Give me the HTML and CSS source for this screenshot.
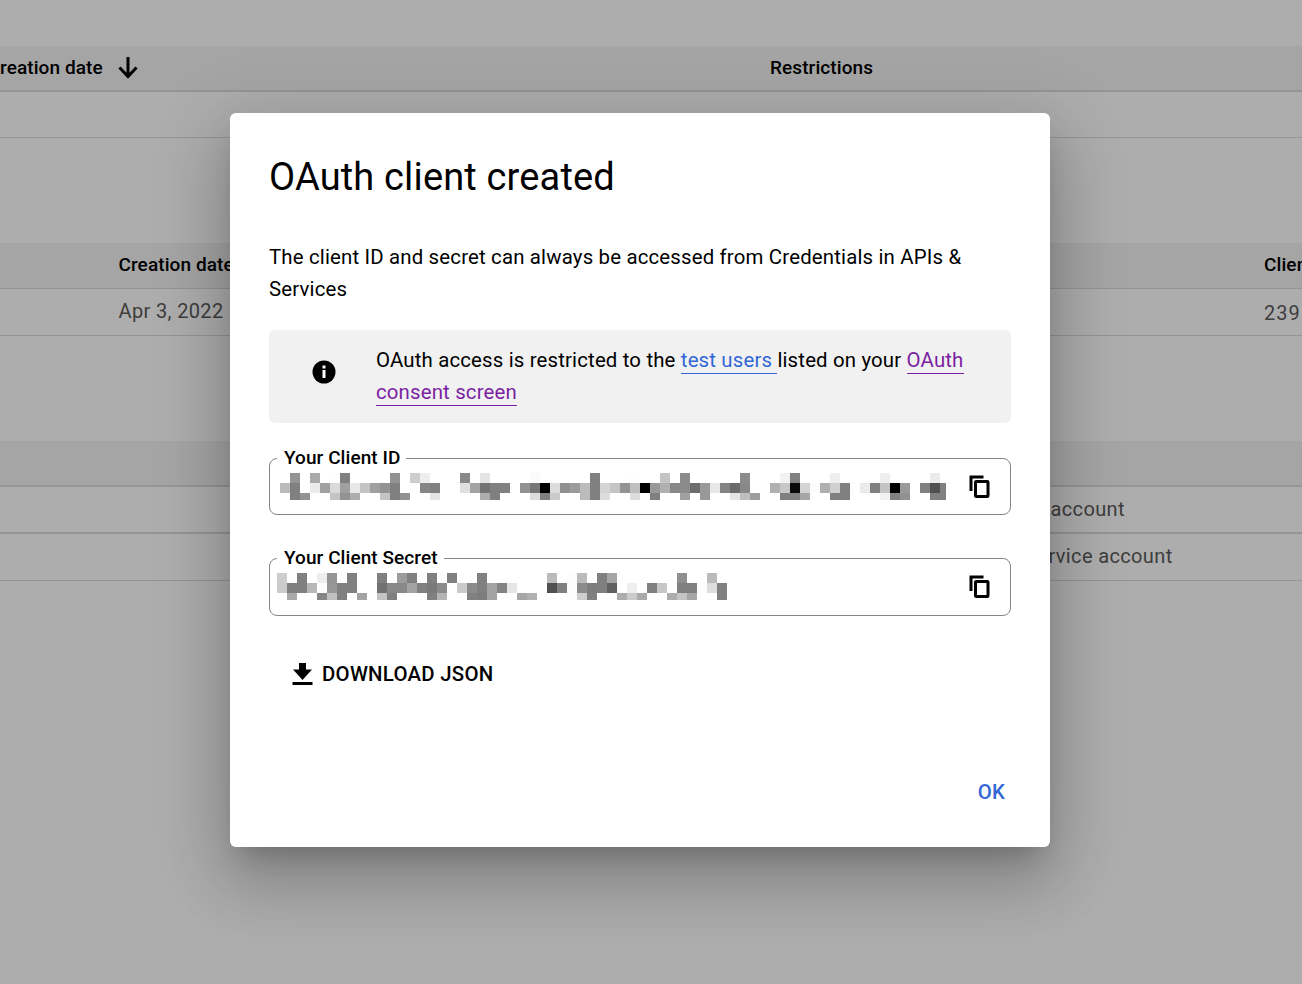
FILE: index.html
```html
<!DOCTYPE html>
<html lang="en">
<head>
<meta charset="utf-8">
<title>OAuth client created</title>
<link rel="stylesheet" href="styles.css">
</head>
<body>
<main class="page">
  <section class="table table-keys">
    <div class="thead thick"><span class="col-date"><span class="th th-date">reation date</span>
      <svg class="sort" width="20" height="22" viewBox="0 0 20 22"><path d="M10 0V19M1.500 10.500L10 19.500L18.500 10.500" fill="none" stroke="#000" stroke-width="3"/></svg></span>
      <span class="th th-restrict">Restrictions</span></div>
    <div class="row"></div>
  </section>
  <section class="table table-clients">
    <div class="thead"><span class="th th-created">Creation date</span><span class="th th-client">Client ID</span></div>
    <div class="row"><span class="td td-created">Apr 3, 2022</span><span class="td td-client">239</span></div>
  </section>
  <section class="table table-accounts">
    <div class="thead thick"></div>
    <div class="row thick"><span class="td td-account">account</span></div>
    <div class="row"><span class="td td-service">rvice account</span></div>
  </section>
</main>
<div class="overlay">
  <div class="dialog" role="dialog" aria-labelledby="title">
    <h1 class="title" id="title"><span class="title-text">OAuth client created</span></h1>
    <p class="intro">The client ID and secret can always be accessed from Credentials in APIs &amp; Services</p>
    <div class="notice">
      <svg class="info" width="24" height="24" viewBox="0 0 24 24"><circle cx="12" cy="12" r="11.500"/><path d="M10.500 5.500h3v3h-3zM10.500 10h3v8h-3z" fill="#fff"/></svg>
      <p class="notice-text">OAuth access is restricted to the <a class="link">test users </a>listed on your <a class="link visited">OAuth</a><br><a class="link visited">consent screen</a></p>
    </div>
    <fieldset class="field field-id">
      <legend class="legend"><span class="label-id">Your Client ID</span></legend>
      <div class="value">
        <svg class="mosaic" id="client-id" width="666" height="27" shape-rendering="crispEdges"></svg>
        <svg class="copy" width="22" height="24" viewBox="0 0 22 24"><path d="M2 16V2H14.500" fill="none" stroke="#000" stroke-width="3"/><rect x="6.500" y="6.500" width="12.500" height="15" rx=".7" fill="none" stroke="#000" stroke-width="3"/></svg>
      </div>
    </fieldset>
    <fieldset class="field field-secret">
      <legend class="legend"><span class="label-secret">Your Client Secret</span></legend>
      <div class="value">
        <svg class="mosaic" id="client-secret" width="450" height="27" shape-rendering="crispEdges"></svg>
        <svg class="copy" width="22" height="24" viewBox="0 0 22 24"><path d="M2 16V2H14.500" fill="none" stroke="#000" stroke-width="3"/><rect x="6.500" y="6.500" width="12.500" height="15" rx=".7" fill="none" stroke="#000" stroke-width="3"/></svg>
      </div>
    </fieldset>
    <div class="download">
      <svg width="21" height="22" viewBox="0 0 21 22"><path d="M7 0h7v6.500h6L10.500 17L1 6.500h6zM.5 19h20v3H.5z"/></svg>
      <span class="download-text">DOWNLOAD JSON</span>
    </div>
    <div class="actions"><span class="ok">OK</span></div>
  </div>
</div>
<script src="mosaic.js"></script>
</body>
</html>
```
FILE: styles.css
```css
* { box-sizing: border-box; }
body { margin: 0; background: #adadad; font-family: Roboto, "Liberation Sans", sans-serif; color: #000; overflow: hidden; }
.page { height: 984px; width: 1302px; padding-top: 46px; overflow: hidden; }
.thead { height: 46px; background: #a5a5a5; border-bottom: 1px solid #959595; display: flex; align-items: center; }
.row { height: 47px; border-bottom: 1px solid #959595; display: flex; align-items: center; }
.thick { border-bottom-width: 2px; }
.table-keys .row { height: 46px; }
.table-clients { margin-top: 105px; }
.table-accounts { margin-top: 105px; }
.th { font-size: 19px; font-weight: 500; line-height: 24px; white-space: nowrap; letter-spacing: .09px; }
.td { font-size: 20px; line-height: 24px; color: #3d3d3d; white-space: nowrap; letter-spacing: .36px; padding-bottom: 2px; }
.col-date { width: 770px; display: flex; align-items: center; gap: 15px; }
.table-clients .thead, .table-clients .row { padding-left: 118.5px; }
.th-created, .td-created { width: 1145.5px; flex: none; }
.table-clients .thead { padding-bottom: 2px; }
.td-client { padding-top: 4px; letter-spacing: 1px; }
.table-accounts .row { padding-left: 1050.5px; }
.table-accounts .td-service { margin-left: -2px; }
.overlay { position: absolute; inset: 0; padding: 113px 0 0 230px; }
.dialog { width: 820px; height: 734px; padding: 39px; border-radius: 6px; background: #fff; display: flex; flex-direction: column;
  box-shadow: 0 17px 24px -11px rgba(0,0,0,.2), 0 38px 60px 5px rgba(0,0,0,.14), 0 14px 72px 13px rgba(0,0,0,.12); }
.title { margin: 0; font-size: 38px; line-height: 50px; font-weight: 400; white-space: nowrap; letter-spacing: .16px; }
.intro { margin: 39px 0 0; font-size: 20.4px; line-height: 32px; letter-spacing: .17px; }
.notice { margin-top: 25px; height: 93px; border-radius: 6px; background: #f1f1f1; display: flex; padding: 14px 0 0 42.5px; flex: none; }
.info { margin-top: 15.5px; flex: none; }
.notice-text { margin: 0 0 0 40.5px; font-size: 20.4px; line-height: 32px; letter-spacing: .16px; white-space: nowrap; }
.link { color: #3367d6; border-bottom: 1px solid #3367d6; padding-bottom: 1px; white-space: pre; }
.visited { color: #7b1fa2; border-color: #7b1fa2; }
.field { margin: 24px 0 0; padding: 0 19px 0 7px; border: 1px solid #80868b; border-radius: 8px; height: 68px; min-width: 0; flex: none; }
.field-secret { margin-top: 32px; height: 69px; }
.legend { padding: 0 6px 0 7px; height: 23px; font-size: 19px; line-height: 22px; font-weight: 500; white-space: nowrap; letter-spacing: .07px; }
.value { display: flex; justify-content: space-between; padding: 3px 0 0 3px; }
.field-secret .value { padding-left: 0; }
.copy { margin-top: 1.5px; }
.download { display: flex; align-items: center; gap: 9px; margin: 46px 0 0 23px; height: 24px; font-size: 20.4px; font-weight: 500; letter-spacing: .26px; }
.actions { display: flex; justify-content: flex-end; margin-top: 94px; padding-right: 6px; }
.ok { font-size: 20.4px; line-height: 24px; font-weight: 500; color: #3367d6; letter-spacing: .2px; }
```
FILE: mosaic.js
```js
// Redacted values: each row lists column:grey pairs, ten pixels per column.
const values = {
  "client-id": [
    "1:94 3:aa 5:fe 6:80 11:92 13:cd 14:ee 18:88 20:e4 25:fb 31:80 35:fe 38:c4 40:8b 46:8b 50:f2 51:80 55:ee 60:ee 65:eb",
    "0:bb 1:80 3:eb 4:a0 5:da 6:a0 7:e8 8:c4 9:a0 10:93 11:80 14:86 15:80 18:e0 19:a3 20:73 21:80 22:80 24:92 25:77 26:00 27:dd 28:90 29:9b 30:bc 31:80 32:d4 33:c4 34:92 35:bf 36:00 37:99 38:b0 39:88 40:8b 41:6d 42:99 43:e7 44:83 45:6b 46:88 49:b0 50:c7 51:0a 52:d4 53:fc 54:b0 55:d0 56:80 58:eb 59:80 60:c4 61:00 62:99 64:80 65:50 66:80",
    "1:80 2:92 5:c4 6:93 7:ad 10:c4 11:80 12:92 15:e4 20:ad 21:80 25:dd 26:80 27:cb 30:bb 31:80 32:dd 35:dd 37:80 40:a0 42:99 45:e4 46:bf 47:9d 50:80 51:80 52:a6 55:80 56:80 60:f2 61:80 62:92 65:80 66:80"
  ],
  "client-secret": [
    "0:ce 2:80 4:ee 5:95 7:80 10:80 12:9c 13:80 15:80 17:80 20:80 27:bb 29:fc 30:bb 32:80 33:a6 40:90 43:bb",
    "0:cb 1:80 2:80 3:b8 4:fd 5:97 6:80 7:80 10:71 11:88 12:88 13:a3 14:80 15:7a 16:8b 18:cb 19:8b 20:80 21:a3 22:83 23:e6 27:50 28:80 29:fd 30:8b 31:7d 32:7f 33:60 35:ee 37:80 38:c7 40:80 41:80 42:fd 43:dd 44:80",
    "1:aa 4:86 5:c0 6:80 8:a3 10:c4 11:80 15:80 16:b5 19:80 20:7d 21:a3 24:a6 25:b0 29:fc 30:ce 31:80 34:ad 35:cb 36:aa 39:ad 40:c4 41:a6 44:80"
  ]
};
for (const [id, rows] of Object.entries(values)) {
  const svg = document.getElementById(id);
  rows.forEach((row, r) => row.split(" ").forEach(cell => {
    const [column, grey] = cell.split(":");
    const rect = document.createElementNS("http://www.w3.org/2000/svg", "rect");
    rect.setAttribute("x", column * 10);
    rect.setAttribute("y", r * 10);
    rect.setAttribute("width", 10);
    rect.setAttribute("height", 10);
    rect.setAttribute("fill", "#" + grey.repeat(3));
    svg.append(rect);
  }));
}
```
